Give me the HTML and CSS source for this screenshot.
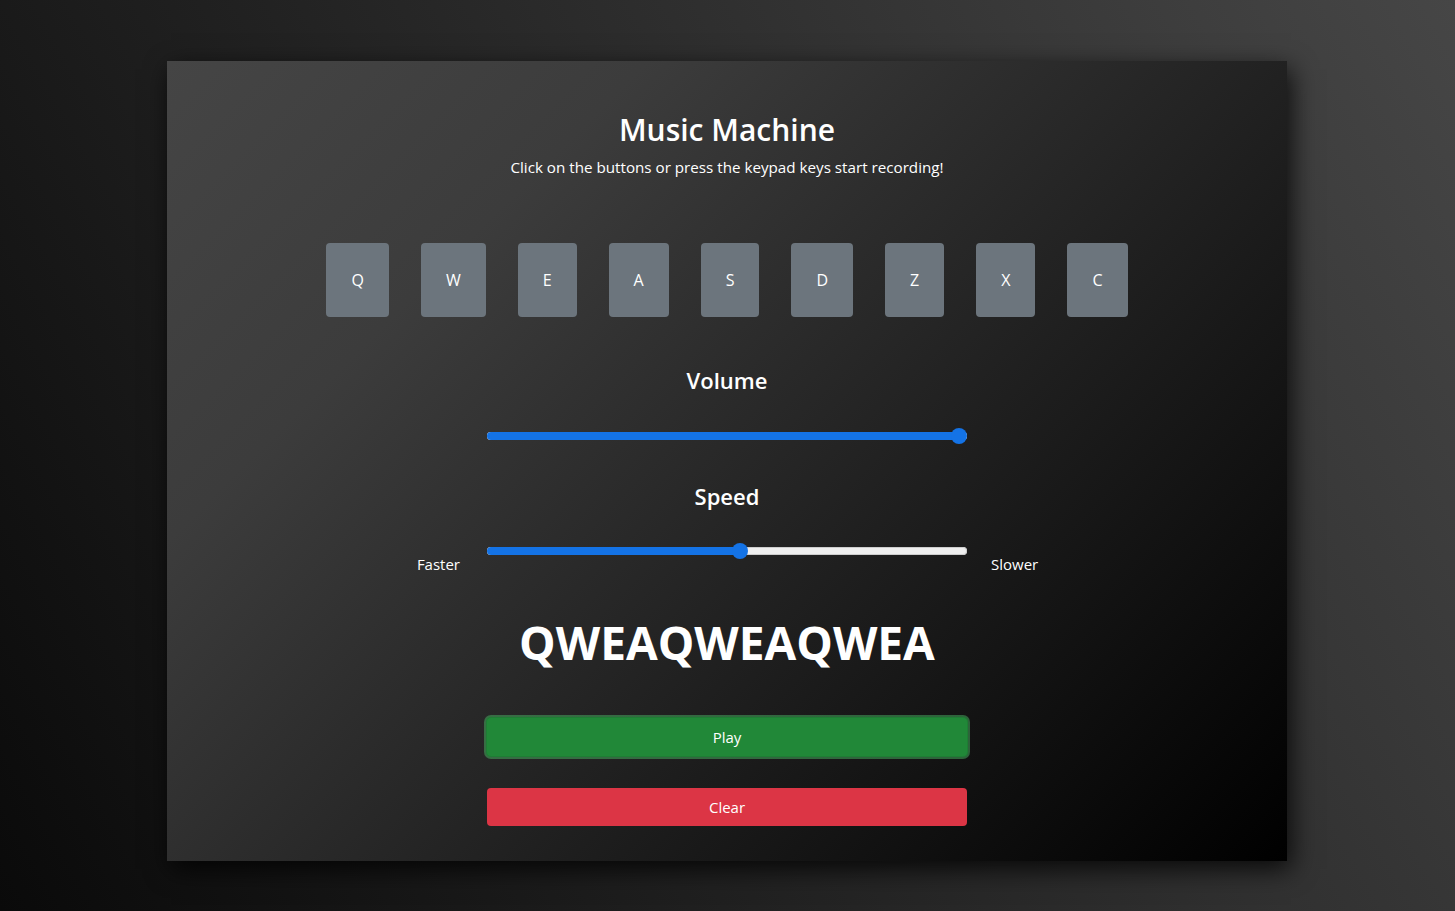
FILE: index.html
```html
<!DOCTYPE html>
<html lang="en">
<head>
<meta charset="utf-8">
<title>Music Machine</title>
<link rel="stylesheet" href="styles.css">
</head>
<body>
  <main class="card">
    <h1 class="title">Music Machine</h1>
    <p class="subtitle">Click on the buttons or press the keypad keys start recording!</p>

    <div class="keys">
      <button class="key">Q</button>
      <button class="key">W</button>
      <button class="key">E</button>
      <button class="key">A</button>
      <button class="key">S</button>
      <button class="key">D</button>
      <button class="key">Z</button>
      <button class="key">X</button>
      <button class="key">C</button>
    </div>

    <h3 class="label volume-label">Volume</h3>
    <div class="slider-row volume-row">
      <div class="slider">
        <div class="track"><div class="fill" style="width: 472px"></div></div>
        <div class="thumb" style="left: 464px"></div>
      </div>
    </div>

    <h3 class="label speed-label">Speed</h3>
    <div class="slider-row speed-row">
      <span class="side side-left">Faster</span>
      <div class="slider">
        <div class="track"><div class="fill" style="width: 253px"></div></div>
        <div class="thumb" style="left: 245px"></div>
      </div>
      <span class="side side-right">Slower</span>
    </div>

    <div class="sequence">QWEAQWEAQWEA</div>

    <button class="btn btn-play">Play</button>
    <button class="btn btn-clear">Clear</button>
  </main>
</body>
</html>
```

FILE: styles.css
```css
* { box-sizing: border-box; }

html, body {
  margin: 0;
  height: 100%;
}

body {
  background: linear-gradient(60deg, #0a0a0a 0%, #464646 100%);
  font-family: "Open Sans", "Noto Sans", sans-serif;
  color: #fff;
  overflow: hidden;
}

.card {
  width: 1120px;
  height: 800px;
  margin: 61px 0 0 167px;
  padding-top: 50px;
  display: flex;
  flex-direction: column;
  align-items: center;
  background: linear-gradient(135deg, #454545 0%, #3c3c3c 25%, #000 100%);
  box-shadow: 4px 8px 24px rgba(0, 0, 0, 0.8);
}

.title {
  margin: 0;
  font-size: 30px;
  line-height: 38px;
  font-weight: 600;
}

.subtitle {
  margin: 6px 0 0;
  font-size: 15.2px;
  line-height: 24px;
}

.keys {
  margin-top: 64px;
  display: flex;
  justify-content: center;
}

.key {
  margin: 0 16px;
  padding: 25px 25px;
  border: 0;
  border-radius: 4px;
  background: #6c757d;
  color: #fff;
  font-family: inherit;
  font-size: 16px;
  line-height: 24px;
}

.label {
  margin: 0;
  font-size: 22px;
  line-height: 29px;
  font-weight: 600;
}

.volume-label { margin-top: 49px; }
.speed-label { margin-top: 38px; }

.slider-row {
  display: flex;
  justify-content: center;
  align-items: flex-start;
}

.volume-row { margin-top: 33px; }
.speed-row { margin-top: 32px; }

.slider {
  position: relative;
  width: 480px;
  height: 16px;
}

.track {
  position: absolute;
  left: 0;
  right: 0;
  top: 4px;
  height: 8px;
  border-radius: 4px;
  background: #efefef;
  box-shadow: inset 0 0 0 1px #cdcdcd;
  overflow: hidden;
}

.fill {
  height: 100%;
  background: #1473e6;
}

.thumb {
  position: absolute;
  top: 0;
  width: 16px;
  height: 16px;
  border-radius: 50%;
  background: #1473e6;
}

.side {
  width: 80px;
  margin-top: 9px;
  font-size: 15px;
  line-height: 24px;
}

.side-left { margin-right: 27px; text-align: right; }
.side-right { margin-left: 24px; width: 83px; text-align: left; }

.sequence {
  margin-top: 37px;
  font-size: 46px;
  line-height: 58px;
  font-weight: 700;
}

.btn {
  width: 480px;
  height: 38px;
  border: 0;
  border-radius: 4px;
  color: #fff;
  font-family: inherit;
  font-size: 15px;
  line-height: 24px;
}

.btn-play {
  margin-top: 47px;
  background: #218838;
  box-shadow: 0 0 0 1px #1e7e34, 0 0 0 3px rgba(72, 180, 97, 0.5);
}

.btn-clear {
  margin-top: 32px;
  background: #dc3545;
}
```
